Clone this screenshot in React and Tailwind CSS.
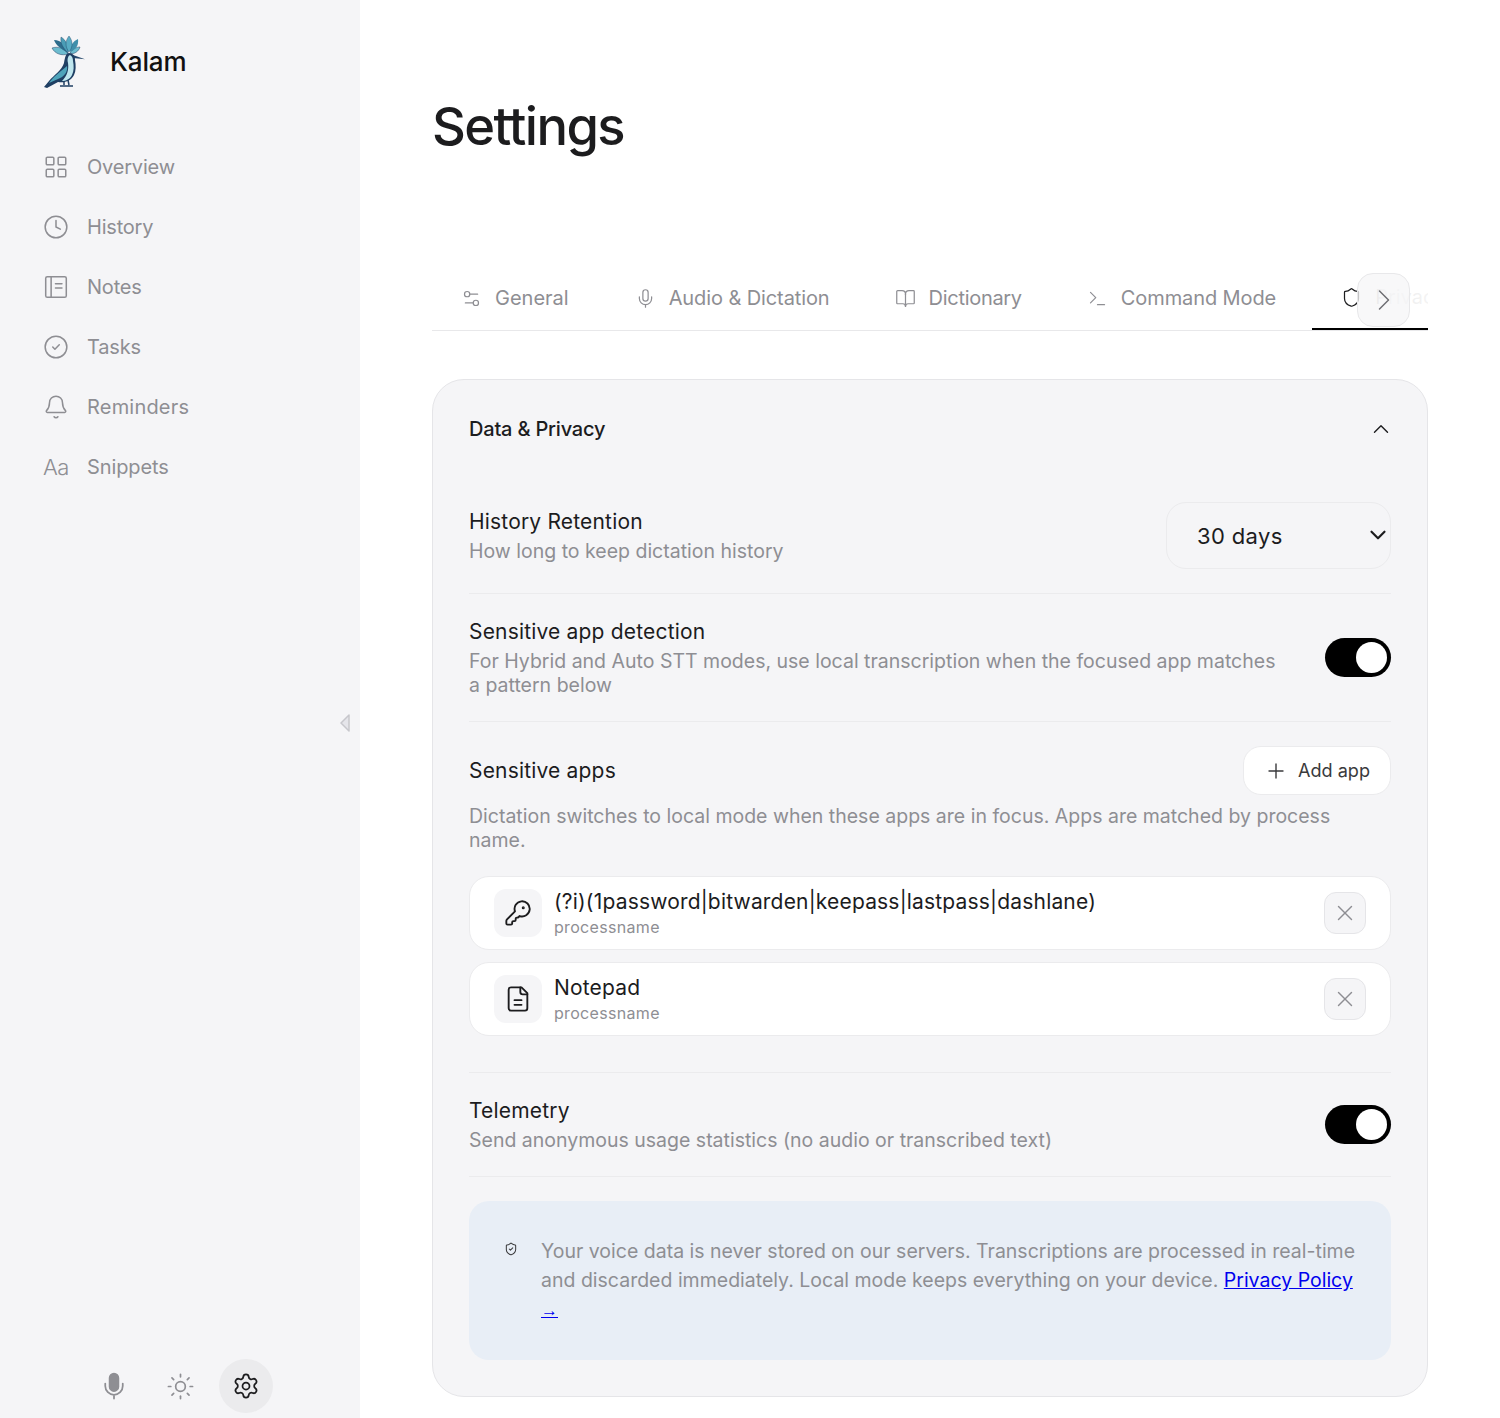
import React from 'react';
import {
  LayoutGrid, Clock, CircleCheck, Bell, Sun, Settings, Settings2, Mic,
  BookOpen, Terminal, Shield, ShieldCheck, ChevronUp, ChevronDown, ChevronRight, Plus, KeyRound, X,
} from 'lucide-react';

const NotesIcon = (props) => (
  <svg viewBox="0 0 24 24" fill="none" stroke="currentColor" strokeWidth="1.5" strokeLinecap="round" strokeLinejoin="round" {...props}>
    <rect x="2.5" y="2.5" width="19" height="19" rx="1.5" />
    <path d="M7.5 2.5v19M11.5 9h6M11.5 13h6" />
  </svg>
);

const SnippetsIcon = () => (
  <span className="text-[22px] leading-none font-light tracking-[-0.02em]">Aa</span>
);

const DocIcon = (props) => (
  <svg viewBox="0 0 24 24" fill="none" stroke="currentColor" strokeWidth="1.75" strokeLinecap="round" strokeLinejoin="round" {...props}>
    <path d="M15 2H6a2 2 0 0 0-2 2v16a2 2 0 0 0 2 2h12a2 2 0 0 0 2-2V7Z" />
    <path d="M14 2v4a2 2 0 0 0 2 2h4" />
    <path d="M9 13h6M9 17h6" />
  </svg>
);

const MicFilled = (props) => (
  <svg viewBox="0 0 24 24" fill="none" stroke="currentColor" strokeWidth="1.4" strokeLinecap="round" {...props}>
    <rect x="8.5" y="2" width="7" height="14" rx="3.5" fill="currentColor" />
    <path d="M19 10v2a7 7 0 0 1-14 0v-2M12 19v3" />
  </svg>
);

const Logo = () => (
  <svg viewBox="0 0 43 52" className="w-[43px] h-[52px] shrink-0">
    <path d="M25 18 C19 20 12 18 9 12 C15 10 21 12 25 18 Z" fill="#6cbccf" stroke="#1f3f63" strokeWidth="0.5" />
    <path d="M25 17 C19 13 13 10 11 4 C18 4 24 10 25 17 Z" fill="#2d6c8c" />
    <path d="M25 17 C20 12 17 7 18 1 C23 4 26 10 25 17 Z" fill="#4a9db6" stroke="#1f3f63" strokeWidth="0.4" />
    <path d="M27 17 C30 13 33 11 37 11 C36 15 31 19 27 17 Z" fill="#6cbccf" stroke="#1f3f63" strokeWidth="0.5" />
    <path d="M27 16 C27 10 30 5 35 3 C36 10 32 14 27 16 Z" fill="#3f8eaa" />
    <path d="M26 16 C22 11 22 5 26 0 C30 5 30 11 26 16 Z" fill="#58acc4" stroke="#1f3f63" strokeWidth="0.4" />
    <path d="M30 19 L42 23.3 L30 22 Z" fill="#27496d" />
    <path d="M26 17 C30 17 32 20 32 24 C33 29 33 35 31 39 C28 45 22 47 15 46 L4 52 L1 51 L6 45 C11 39 19 34 21 27 C22 21 23 17 26 17 Z" fill="#1f3f63" />
    <path d="M27 19 C29 20 30 22 30 25 C31 30 31 35 29 39 C27 43 23 45 19 45 C24 40 26 34 25 27 C24 23 25 20 27 19 Z" fill="#bfe6ee" />
    <path d="M24 30 C25 36 21 41 15 43 L6 47 C10 41 18 35 24 30 Z" fill="#4ea3ba" />
    <path d="M21 45 L21 49 M25 44 L26 49 M17 50 H30" stroke="#1f3f63" strokeWidth="1.5" fill="none" />
  </svg>
);

const navItems = [
  { label: 'Overview', Icon: LayoutGrid, tracking: 'tracking-[-0.01em]' },
  { label: 'History', Icon: Clock, tracking: 'tracking-[-0.01em]' },
  { label: 'Notes', Icon: NotesIcon, tracking: 'tracking-[-0.01em]' },
  { label: 'Tasks', Icon: CircleCheck, tracking: 'tracking-[-0.01em]' },
  { label: 'Reminders', Icon: Bell, tracking: 'tracking-[0.01em]' },
  { label: 'Snippets', Icon: SnippetsIcon, tracking: 'tracking-[-0.005em]' },
];

const tabs = [
  { label: 'General', Icon: Settings2, cls: 'pr-[33px]', tracking: 'tracking-normal' },
  { label: 'Audio & Dictation', Icon: Mic, cls: 'pr-[32px]', tracking: 'tracking-[-0.1px]' },
  { label: 'Dictionary', Icon: BookOpen, cls: 'pr-[32px]', tracking: 'tracking-[-0.3px]' },
  { label: 'Command Mode', Icon: Terminal, cls: 'pr-[32px]', tracking: 'tracking-[-0.1px]' },
];

const Toggle = () => (
  <div className="w-[66px] h-[39px] mb-[2px] rounded-full bg-black flex items-center justify-end pr-[4px] shrink-0">
    <div className="w-[31px] h-[31px] rounded-full bg-white" />
  </div>
);

const Sidebar = () => (
  <aside className="w-[360px] shrink-0 h-[1418px] bg-[#f5f5f7] flex flex-col">
    <div className="flex items-center gap-[24px] pl-[43px] pt-[36px] h-[88px]">
      <Logo />
      <span className="text-[26px] font-medium text-[#111] mb-[2px] tracking-[-0.005em]">Kalam</span>
    </div>
    <nav className="mt-[49px] flex flex-col">
      {navItems.map(({ label, Icon, tracking }) => (
        <div key={label} className="h-[60px] flex items-center pl-[44px] gap-[19px] text-[#8e8e93]">
          <span className="w-[24px] flex justify-center shrink-0">
            <Icon className="w-[26px] h-[26px] shrink-0" strokeWidth={1.4} />
          </span>
          <span className={`text-[20px] ${tracking}`}>{label}</span>
        </div>
      ))}
    </nav>
    <div className="flex-1 flex items-start justify-end pr-[10px] pt-[217px]">
      <svg viewBox="0 0 10 18" className="w-[10px] h-[18px]" fill="#e5e5ea" stroke="#c7c7cc" strokeWidth="1.5" strokeLinejoin="round">
        <path d="M9 1 L1 9 L9 17 Z" />
      </svg>
    </div>
    <div className="flex items-center justify-center gap-[12px] pb-[5px]">
      <div className="w-[54px] h-[54px] flex items-center justify-center text-[#8e8e93]">
        <MicFilled className="w-[30px] h-[30px]" />
      </div>
      <div className="w-[54px] h-[54px] flex items-center justify-center text-[#8e8e93]">
        <Sun className="w-[29px] h-[29px]" strokeWidth={1.4} />
      </div>
      <div className="w-[54px] h-[54px] rounded-full bg-[#ebebed] flex items-center justify-center text-[#1c1c1e]">
        <Settings className="w-[28px] h-[28px]" strokeWidth={1.5} />
      </div>
    </div>
  </aside>
);

const Tabs = () => (
  <div className="relative mt-[112px] h-[62px] border-b border-[#e8e8ea]">
    <div className="flex gap-[4px] h-[61px] overflow-hidden">
      {tabs.map(({ label, Icon, cls, tracking }) => (
        <div key={label} className={`flex items-center gap-[13px] pl-[29px] pb-[3px] text-[#8e8e93] shrink-0 ${cls}`}>
          <Icon className="w-[21px] h-[21px]" strokeWidth={1.4} />
          <span className={`text-[20px] whitespace-nowrap ${tracking}`}>{label}</span>
        </div>
      ))}
      <div className="flex items-center gap-[13px] pl-[29px] pb-[3px] w-[116px] shrink-0 border-b-2 border-black text-[#1c1c1e] overflow-hidden">
        <Shield className="w-[21px] h-[21px] shrink-0" strokeWidth={1.4} />
        <span className="text-[20px]">Privacy</span>
      </div>
    </div>
    <div className="absolute top-0 right-0 bottom-[3px] w-[72px] bg-gradient-to-r from-white/0 via-white/90 via-[35%] to-white/95" />
    <button className="absolute right-[18px] top-[4px] w-[53px] h-[54px] rounded-[16px] border border-[#e8e8ea] bg-[#f5f5f7]/75 flex items-center justify-center text-[#6e6e73]">
      <ChevronRight className="w-[36px] h-[36px]" strokeWidth={1} />
    </button>
  </div>
);

const AppRow = ({ Icon, name, strokeWidth }) => (
  <div className="h-[74px] rounded-[20px] border border-[#ebebed] bg-white flex items-center pl-[24px] pr-[24px]">
    <div className="w-[48px] h-[48px] rounded-[12px] bg-[#f5f5f7] flex items-center justify-center text-[#1c1c1e] shrink-0">
      <Icon className="w-[28px] h-[28px]" strokeWidth={strokeWidth} />
    </div>
    <div className="ml-[12px] flex-1 min-w-0">
      <div className="text-[21px] leading-[26px] text-[#1c1c1e] tracking-[0.18px]">{name}</div>
      <div className="mt-[1px] text-[16px] leading-[22px] text-[#8e8e93] tracking-[0.02em]">processname</div>
    </div>
    <button className="w-[42px] h-[42px] rounded-[12px] border border-[#e5e5e8] bg-[#f5f5f7] flex items-center justify-center text-[#8e8e93]">
      <X className="w-[26px] h-[26px]" strokeWidth={1.3} />
    </button>
  </div>
);

const Title = ({ children }) => (
  <div className="text-[21px] leading-[26px] text-[#1c1c1e] tracking-[0.18px]">{children}</div>
);

const Desc = ({ children }) => (
  <div className="text-[19.5px] leading-[24px] text-[#8e8e93]">{children}</div>
);

export default function App() {
  return (
    <div className="flex w-[1500px] h-[1418px] overflow-hidden bg-white font-['Inter',sans-serif]">
      <Sidebar />
      <main className="flex-1 min-w-0 pl-[72px] pr-[72px]">
        <h1 className="mt-[95px] text-[52.5px] leading-[62px] font-medium text-[#1c1c1e] tracking-[-0.03em]">Settings</h1>
        <Tabs />
        <section className="mt-[48px] h-[1018px] rounded-[32px] border border-[#e5e5e8] bg-[#f5f5f7] px-[36px]">
          <div className="h-[98px] flex items-center justify-between">
            <span className="text-[20px] font-medium text-[#1c1c1e] tracking-[-0.01em]">Data &amp; Privacy</span>
            <ChevronUp className="w-[26px] h-[26px] text-[#1c1c1e] -mr-[3px]" strokeWidth={1.3} />
          </div>
          <div className="mt-[24px] pb-[24px] border-b border-[#ebebed] flex items-center justify-between">
            <div className="flex flex-col gap-[4px]">
              <Title>History Retention</Title>
              <Desc>How long to keep dictation history</Desc>
            </div>
            <div className="relative">
              <select className="block appearance-none w-[225px] h-[67px] rounded-[20px] border border-[#ebebed] bg-[#f5f5f7] pl-[30px] pr-[4px] pt-[2px] text-[22px] text-[#1c1c1e] tracking-[0.37px]">
                <option>30 days</option>
              </select>
              <ChevronDown className="absolute right-0 top-[20px] w-[26px] h-[26px] text-[#1c1c1e] pointer-events-none" strokeWidth={2} />
            </div>
          </div>
          <div className="pt-[25px] pb-[24px] border-b border-[#ebebed] flex items-center justify-between">
            <div className="w-[815px] flex flex-col gap-[4px]">
              <Title>Sensitive app detection</Title>
              <Desc>For Hybrid and Auto STT modes, use local transcription when the focused app matches a pattern below</Desc>
            </div>
            <Toggle />
          </div>
          <div className="pt-[24px] pb-[36px] border-b border-[#ebebed]">
            <div className="flex items-center justify-between">
              <Title>Sensitive apps</Title>
              <button className="w-[148px] h-[49px] rounded-[18px] border border-[#ebebed] bg-white flex items-center justify-center gap-[10px] text-[#3a3a3c]">
                <Plus className="w-[24px] h-[24px]" strokeWidth={1.4} />
                <span className="text-[18.1px]">Add app</span>
              </button>
            </div>
            <div className="mt-[9px]">
              <Desc>Dictation switches to local mode when these apps are in focus. Apps are matched by process name.</Desc>
            </div>
            <div className="mt-[24px] flex flex-col gap-[12px]">
              <AppRow Icon={KeyRound} strokeWidth={1.6} name="(?i)(1password|bitwarden|keepass|lastpass|dashlane)" />
              <AppRow Icon={DocIcon} strokeWidth={1.6} name="Notepad" />
            </div>
          </div>
          <div className="pt-[25px] pb-[24px] border-b border-[#ebebed] flex items-center justify-between">
            <div className="flex flex-col gap-[4px]">
              <Title>Telemetry</Title>
              <Desc>Send anonymous usage statistics (no audio or transcribed text)</Desc>
            </div>
            <Toggle />
          </div>
          <div className="mt-[24px] h-[159px] rounded-[20px] bg-[#e8eef6] flex pl-[35px] pr-[32px] pt-[36px]">
            <ShieldCheck className="w-[14px] h-[14px] mt-[5px] text-[#3a3a3c] shrink-0" strokeWidth={1.75} />
            <p className="ml-[23px] text-[19.5px] leading-[29px] text-[#8e8e93]">
              Your voice data is never stored on our servers. Transcriptions are processed in <span className="whitespace-nowrap">real-time</span> and discarded immediately. Local mode keeps everything on your device.{' '}
              <a href="#privacy" className="text-[#0000ee] underline"><span className="whitespace-nowrap">Privacy Policy</span> <span className="font-['Liberation_Sans',sans-serif] text-[17px]">→</span></a>
            </p>
          </div>
        </section>
      </main>
    </div>
  );
}
